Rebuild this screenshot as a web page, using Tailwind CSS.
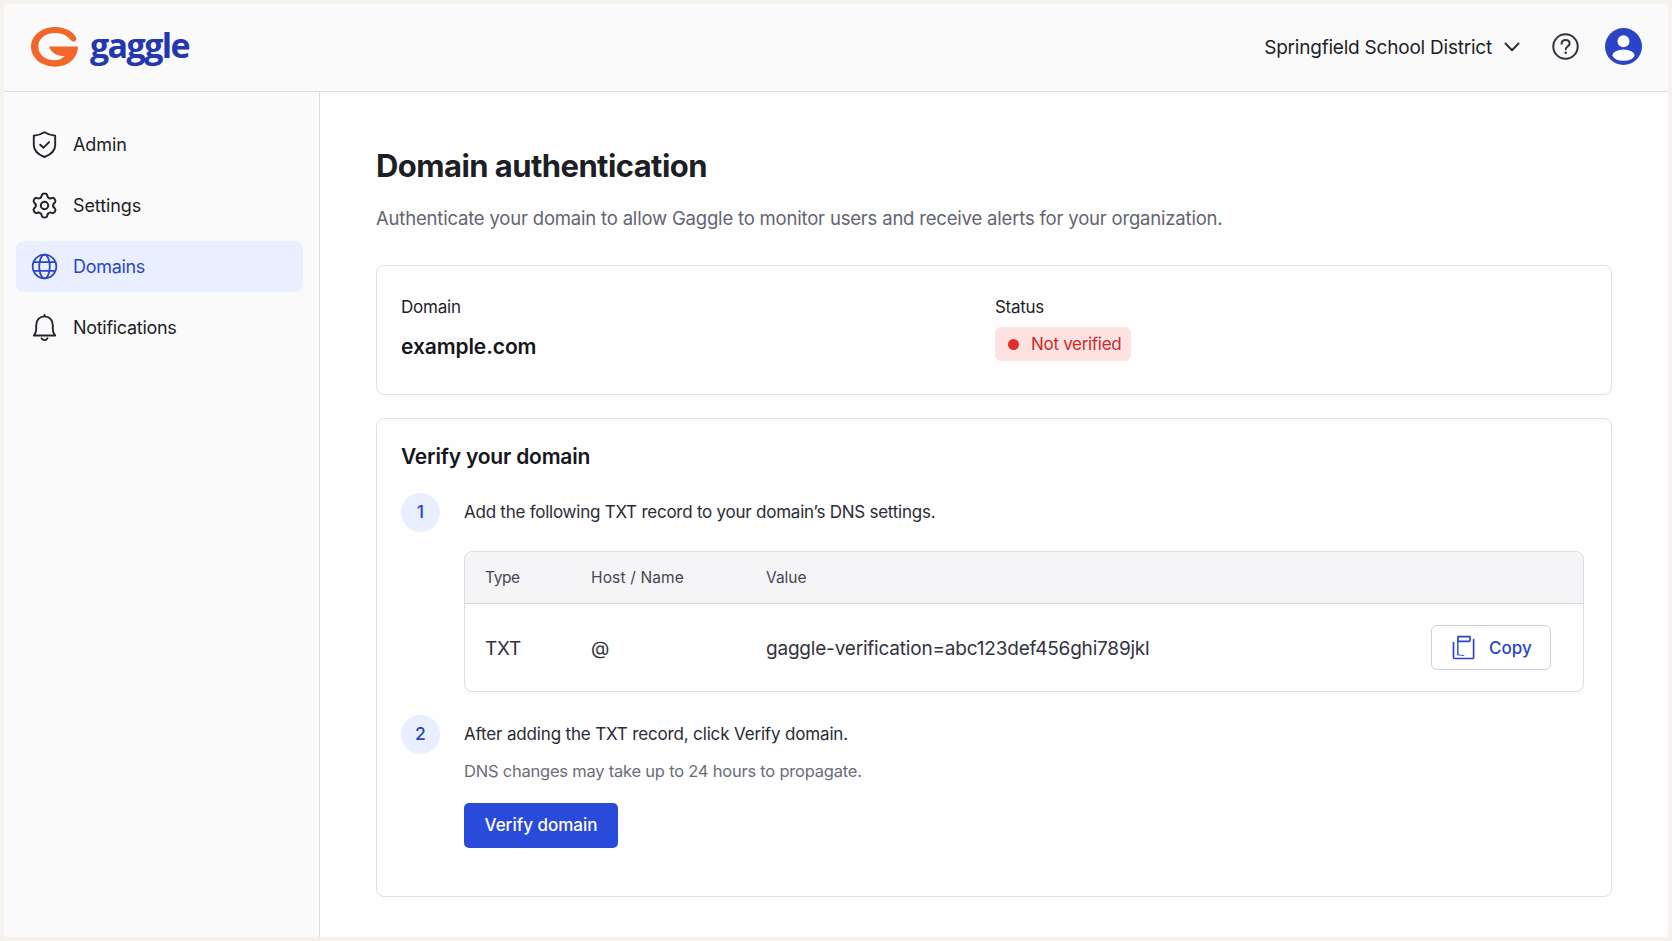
<!DOCTYPE html>
<html lang="en">
<head>
    <meta charset="UTF-8">
    <meta name="viewport" content="width=device-width, initial-scale=1.0">
    <title>Domain authentication - Gaggle</title>
    <script src="https://cdn.jsdelivr.net/npm/@tailwindcss/browser@4"></script>
</head>
<body class="h-screen overflow-hidden bg-[#f5f1ec] p-1 font-['Inter',sans-serif] text-[#1d1e26]">
<div class="flex h-full flex-col bg-[#fefefe]">

    <!-- Top bar -->
    <header class="flex h-[88px] shrink-0 items-center justify-between border-b-[1.5px] border-[#dedee0] bg-[#fafafa] pb-[2px] pl-[27px] pr-[26px]">
        <div class="flex items-center">
            <svg class="h-[40px] w-[47px]" viewBox="0 0 47 40" fill="#f2662b">
                <path d="M45 10.2C41.6 4.2 33.5 0 24 0 10.7 0 0 8.6 0 19.8S10.7 39.7 24 39.7c13 0 22.900-8.300 22.900-20.200H18c1.500 5.200 7.200 9.800 15.800 9.600-2.600 2.800-6 4.200-10.500 4.200C14.300 33.300 7.300 27.500 7.300 19.500 7.300 11.500 14.600 6 23.800 6c7 0 12.400 2.600 15.700 6.800 1.300 1.600 2.700 2.200 4.200 1.500 1.600-.8 2.200-2.500 1.300-4.100Z"/>
            </svg>
            <span class="ml-[12px] -mt-[4px] text-[34px] leading-[42px] font-bold tracking-[-1.600px] text-[#2338b0] font-['Open_Sans',sans-serif]">gaggle</span>
        </div>
        <div class="flex items-center">
            <span class="pt-[3px] text-[19px] tracking-[-0.22px]">Springfield School District</span>
            <svg class="ml-[12px] mt-px h-[10px] w-[16px]" viewBox="0 0 16 10" fill="none" stroke="#32323f" stroke-width="2" stroke-linecap="round" stroke-linejoin="round">
                <path d="M1.500 1.500 8 8.200l6.500-6.700"/>
            </svg>
            <svg class="ml-[32px] h-[27px] w-[27px]" viewBox="0 0 27 27" fill="none" stroke="#32323f" stroke-width="2" stroke-linecap="round" stroke-linejoin="round">
                <circle cx="13.500" cy="13.500" r="12.200"/>
                <path d="M9.600 10.700c.1-2.300 1.700-3.700 4-3.700s4 1.400 4 3.500c0 2.900-3.900 3-3.900 5.800"/>
                <circle cx="13.700" cy="19.700" r="1.300" fill="#32323f" stroke="none"/>
            </svg>
            <svg class="ml-[26px] h-[37px] w-[37px]" viewBox="0 0 37 37">
                <circle cx="18.500" cy="18.500" r="18.500" fill="#2b43c6"/>
                <circle cx="18.500" cy="13.200" r="6" fill="#fff"/>
                <ellipse cx="18.500" cy="27.200" rx="11" ry="5.600" fill="#fff"/>
            </svg>
        </div>
    </header>

    <div class="flex min-h-0 flex-1">

        <!-- Sidebar -->
        <nav class="flex w-[316px] shrink-0 flex-col gap-[10px] border-r-[1.5px] border-[#dedee0] bg-[#fafafa] pl-3 pr-4 pt-[27px] text-[18px] tracking-[-0.3px]">
            <a class="flex h-[51px] items-center rounded-lg pl-[15px]">
                <svg class="mr-[15px] h-[27px] w-[27px]" viewBox="0 0 27 27" fill="none" stroke="#22232d" stroke-width="1.900" stroke-linecap="round" stroke-linejoin="round">
                    <path d="M13.500 1.300c3.200 2 6.700 3 10.700 3.400v9.300c0 6-4.300 9.600-10.700 12-6.400-2.400-10.700-6-10.700-12V4.700c4-.4 7.500-1.400 10.700-3.400Z"/>
                    <path d="m9.200 13.700 3.300 3 5.600-5.600"/>
                </svg>
                <span class="tracking-[-0.1px]">Admin</span>
            </a>
            <a class="flex h-[51px] items-center rounded-lg pl-[15px]">
                <svg class="mr-[15px] h-[27px] w-[27px]" viewBox="-13.500 -13.500 27 27" fill="none" stroke="#22232d" stroke-width="2" stroke-linecap="round" stroke-linejoin="round">
                    <path id="tooth" d="M-3.500-8.200C-2.700-9-2.800-10-2.600-10.700Q-2.200-12 0-12T2.600-10.700C2.800-10 2.700-9 3.500-8.200Q4.200-7.300 5.350-7.130"/>
                    <use href="#tooth" transform="rotate(60)"/>
                    <use href="#tooth" transform="rotate(120)"/>
                    <use href="#tooth" transform="rotate(180)"/>
                    <use href="#tooth" transform="rotate(240)"/>
                    <use href="#tooth" transform="rotate(300)"/>
                    <circle r="3.700"/>
                </svg>
                <span class="tracking-[-0.1px]">Settings</span>
            </a>
            <a class="flex h-[51px] items-center rounded-lg bg-[#e9effe] pl-[15px] text-[#2b45c8]">
                <svg class="mr-[15px] h-[27px] w-[27px]" viewBox="0 0 27 27" fill="none" stroke="currentColor" stroke-width="1.800">
                    <circle cx="13.500" cy="13.500" r="11.800"/>
                    <ellipse cx="13.500" cy="13.500" rx="5.300" ry="11.800"/>
                    <path d="M2.600 9.200h21.800M2.600 17.900h21.800"/>
                </svg>
                <span>Domains</span>
            </a>
            <a class="flex h-[51px] items-center rounded-lg pl-[15px]">
                <svg class="mr-[15px] h-[27px] w-[27px]" viewBox="0 0 27 27" fill="none" stroke="#22232d" stroke-width="1.900" stroke-linecap="round" stroke-linejoin="round">
                    <path d="M2.800 21.500c1.700-2 2.400-3.800 2.400-6.300v-4C5.200 6 8.600 2.400 13.500 2.400s8.300 3.600 8.300 8.800v4c0 2.500.7 4.300 2.400 6.300Z"/>
                    <path d="M13.500 1v1M10.600 24.300c.6 1.200 1.600 1.800 2.900 1.800s2.300-.6 2.900-1.800"/>
                </svg>
                <span>Notifications</span>
            </a>
        </nav>

        <!-- Page content -->
        <main class="flex-1 px-14 pt-[54px]">
            <h1 class="text-[31px] leading-10 font-bold tracking-[-0.57px]">Domain authentication</h1>
            <p class="mt-[18px] text-[18.500px] leading-7 tracking-[-0.19px] text-[#636471]">Authenticate your domain to allow Gaggle to monitor users and receive alerts for your organization.</p>

            <!-- Domain summary -->
            <section class="mt-[33px] grid h-[130px] grid-cols-2 rounded-lg border border-[#e0e1e4] bg-[#fefefe] pl-6 pr-[22px]">
                <div class="pt-[29px]">
                    <div class="text-[17px] leading-6 tracking-[-0.2px]">Domain</div>
                    <div class="mt-[14px] text-[21px] leading-7 font-semibold tracking-[-0.1px] text-[#15161c]">example.com</div>
                </div>
                <div class="pt-[29px]">
                    <div class="text-[17px] leading-6 tracking-[-0.3px]">Status</div>
                    <div class="mt-2 inline-flex h-[34px] w-[136px] items-center gap-3 rounded-md bg-[#fee2e1] pl-[13px] text-[17px] tracking-[-0.3px] text-[#cb2a24]">
                        <span class="h-[11px] w-[11px] rounded-full bg-[#df3029]"></span>
                        <span class="pt-px">Not verified</span>
                    </div>
                </div>
            </section>

            <!-- Verification steps -->
            <section class="mt-[23px] h-[479px] rounded-lg border border-[#e0e1e4] bg-[#fefefe] pl-6 pr-[27px] pt-[24px]">
                <h2 class="text-[21px] leading-7 font-semibold tracking-[-0.2px] text-[#15161c]">Verify your domain</h2>

                <div class="mt-[22px] flex gap-6">
                    <span class="flex h-[39px] w-[39px] shrink-0 items-center justify-center rounded-full bg-[#e9effe] text-[17.500px] font-medium text-[#2b45c8]">1</span>
                    <div class="flex-1">
                        <p class="text-[17px] leading-[39px] tracking-[-0.24px] text-[#2a2b35]">Add the following TXT record to your domain’s DNS settings.</p>
                        <div class="mt-[19px] rounded-lg border border-[#dcdde0]">
                            <div class="grid h-[52px] grid-cols-[106px_175px_1fr] items-center rounded-t-lg border-b border-[#d5d6d9] bg-[#f5f5f7] pl-[20px] text-[15.500px] text-[#454653]">
                                <span class="tracking-[-0.4px]">Type</span>
                                <span class="tracking-[0.15px]">Host / Name</span>
                                <span>Value</span>
                            </div>
                            <div class="grid h-[87px] grid-cols-[106px_175px_1fr_auto] items-center pl-[20px] pr-[32px] text-[19px] tracking-[-0.2px] text-[#32333e]">
                                <span class="pt-[3px]">TXT</span>
                                <span class="pt-[3px]">@</span>
                                <span class="pt-[3px]">gaggle-verification=abc123def456ghi789jkl</span>
                                <button class="flex h-[45px] w-[120px] items-center rounded-md border-[1.500px] border-[#cdd0dc] bg-white pl-[20px] text-[17px] font-medium text-[#2b45c8]">
                                    <svg class="mr-[14px] h-[25px] w-[23px]" viewBox="0 0 23 25" fill="none" stroke="currentColor" stroke-width="1.700" stroke-linecap="round" stroke-linejoin="round">
                                        <path d="M1.500 7.500v14.800c0 .8.400 1.200 1.200 1.200h17.800c.7 0 1.100-.4 1.100-1.100V4.600"/>
                                        <path d="M6 1.700h12v3.600c0 .7-.4 1.100-1.100 1.100H7.100C6.400 6.400 6 6 6 5.300Z"/>
                                        <path d="M5.800 6v13.600" stroke-width="1.400"/>
                                        <path d="M5.800 19.800l6 .8" stroke-width=".9"/>
                                    </svg>
                                    <span class="pt-[2px] tracking-[0px]">Copy</span>
                                </button>
                            </div>
                        </div>
                    </div>
                </div>

                <div class="mt-[23px] flex gap-6">
                    <span class="flex h-[39px] w-[39px] shrink-0 items-center justify-center rounded-full bg-[#e9effe] text-[17.500px] font-medium text-[#2b45c8]">2</span>
                    <div class="flex-1">
                        <p class="text-[17px] leading-[39px] tracking-[-0.16px] text-[#2a2b35]">After adding the TXT record, click Verify domain.</p>
                        <p class="mt-[5px] text-[16.500px] leading-6 tracking-[-0.22px] text-[#6c6d79]">DNS changes may take up to 24 hours to propagate.</p>
                        <button class="mt-5 block h-[45px] w-[154px] rounded-[5px] bg-[#2a4bd9] text-[17px] font-medium text-white">Verify domain</button>
                    </div>
                </div>
            </section>
        </main>
    </div>
</div>
</body>
</html>
